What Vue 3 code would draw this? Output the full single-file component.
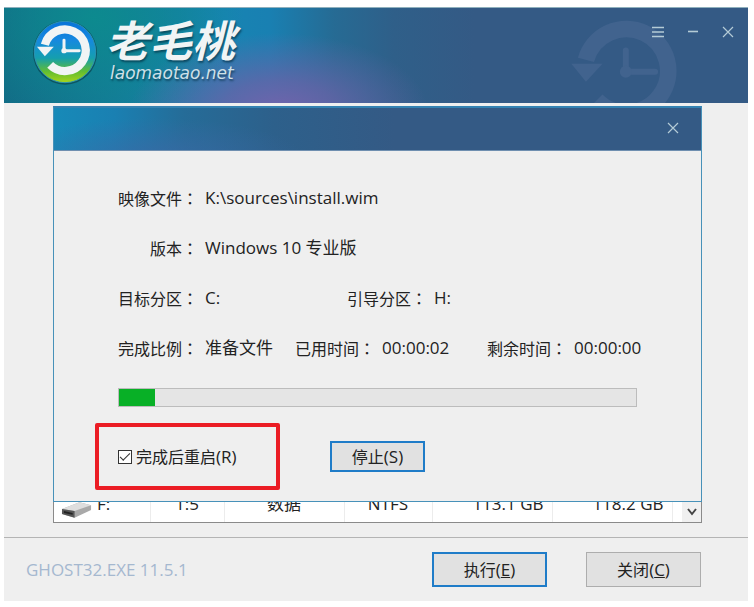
<template>
  <div class="window">
    <header class="banner">
      <svg class="watermark" viewBox="0 0 200 200" aria-hidden="true">
        <path class="ring" d="M55 139 A63 63 0 1 0 39 78" />
        <path class="arrow" d="M17 84 H64 L39 111 Z" />
        <path class="hands" d="M99 64 V96 H143" />
        <circle class="arrow" cx="99" cy="96" r="9" />
      </svg>
      <div class="brand">
        <svg class="logo" viewBox="0 0 200 200" aria-hidden="true">
          <defs>
            <linearGradient id="disc" x1="0" y1="0" x2="0" y2="1">
              <stop offset="0" stop-color="#0873d8" />
              <stop offset="0.3" stop-color="#1688e0" />
              <stop offset="0.6" stop-color="#159fae" />
              <stop offset="0.82" stop-color="#62bd32" />
              <stop offset="1" stop-color="#a8d51c" />
            </linearGradient>
          </defs>
          <circle cx="100" cy="102" r="97" fill="#0c5563" />
          <circle cx="100" cy="100" r="93" fill="url(#disc)" stroke="#2a94b4" stroke-width="3" />
          <path class="ring" d="M55 139 A63 63 0 1 0 39 78" />
          <path class="arrow" d="M15 84 H66 L39 113 Z" />
          <path class="hands" d="M97 64 V96 H143" />
          <circle class="arrow" cx="97" cy="96" r="8" />
        </svg>
        <div class="brand-text">
          <div class="brand-name">老毛桃</div>
          <div class="brand-url">laomaotao.net</div>
        </div>
      </div>
      <div class="controls">
        <button type="button" class="icon-btn" aria-label="菜单">
          <svg viewBox="0 0 12 12"><path d="M0 1.5H12M0 6H12M0 10.5H12" /></svg>
        </button>
        <button type="button" class="icon-btn" aria-label="最小化">
          <svg viewBox="0 0 12 12"><path d="M1 5.5H11" /></svg>
        </button>
        <button type="button" class="icon-btn" aria-label="关闭">
          <svg viewBox="0 0 12 12"><path class="thin" d="M1 1L11 11M11 1L1 11" /></svg>
        </button>
      </div>
    </header>

    <main class="content">
      <section class="dialog" role="dialog">
        <div class="dialog-bar">
          <button type="button" class="icon-btn" aria-label="关闭">
            <svg viewBox="0 0 12 12"><path class="thin" d="M1 1L11 11M11 1L1 11" /></svg>
          </button>
        </div>
        <div class="details">
          <div v-for="(row, i) in rows" :key="i" class="row" :class="row.layout">
            <div v-for="item in row.items" :key="item.label" class="field">
              <span class="label">{{ item.label }}<span class="colon">：</span></span>
              <span class="value">{{ item.value }}</span>
            </div>
          </div>
          <div class="progress" role="progressbar" :aria-valuenow="percent">
            <div class="progress-fill" :style="{ width: percent + '%' }"></div>
          </div>
        </div>
        <div class="actions">
          <div class="highlight">
            <input id="restart" v-model="restart" type="checkbox" />
            <label for="restart">完成后重启<span class="key">(R)</span></label>
          </div>
          <button type="button" class="btn primary stop">停止<span class="key">(S)</span></button>
        </div>
      </section>

      <div class="drives">
        <table>
          <tbody>
            <tr>
              <td>
                <div class="drive">
                  <svg viewBox="0 0 32 18" aria-hidden="true">
                    <path d="M1 8 L19 1 L31 4 L31 9 L14 17 L1 13 Z" fill="#a9a9a9" />
                    <path d="M1 8 L19 1 L31 4 L14 10 Z" fill="#dedede" />
                    <path d="M1 8 L14 10 V17 L1 13 Z" fill="#555" />
                    <path d="M3 10 L12 12 V14 L3 12 Z" fill="#222" />
                  </svg>
                  <span>F:</span>
                </div>
              </td>
              <td>1:5</td>
              <td>数据</td>
              <td>NTFS</td>
              <td class="size">113.1 GB</td>
              <td class="size">118.2 GB</td>
              <td></td>
            </tr>
          </tbody>
        </table>
        <button type="button" class="scroll-down" aria-label="向下滚动">
          <svg viewBox="0 0 10 8"><path d="M1 1L5 6L9 1" /></svg>
        </button>
      </div>
    </main>

    <footer class="footer">
      <span class="version">GHOST32.EXE 11.5.1</span>
      <button type="button" class="btn primary">执行<span class="key">(<u>E</u>)</span></button>
      <button type="button" class="btn">关闭<span class="key">(<u>C</u>)</span></button>
    </footer>
  </div>
</template>

<script setup>
import { ref } from 'vue'

const restart = ref(true)
const percent = ref(7)

const rows = [
  { layout: '', items: [{ label: '映像文件', value: 'K:\\sources\\install.wim' }] },
  { layout: '', items: [{ label: '版本', value: 'Windows 10 专业版' }] },
  {
    layout: 'two',
    items: [
      { label: '目标分区', value: 'C:' },
      { label: '引导分区', value: 'H:' },
    ],
  },
  {
    layout: 'three',
    items: [
      { label: '完成比例', value: '准备文件' },
      { label: '已用时间', value: '00:00:02' },
      { label: '剩余时间', value: '00:00:00' },
    ],
  },
]
</script>

<style>
body {
  margin: 0;
  background: #fff;
}
</style>

<style scoped>
* {
  box-sizing: border-box;
}

.window {
  margin: 7px 6px 6px 4px;
  background: #efefef;
  color: #222;
  font-family: 'Open Sans', 'Noto Sans CJK SC', sans-serif;
  font-size: 16px;
  line-height: 24px;
}

button {
  font: inherit;
  color: inherit;
  padding: 0;
}

.banner {
  position: relative;
  display: flex;
  justify-content: space-between;
  height: 96px;
  overflow: hidden;
  border-top: 1px solid #8fb0bd;
  background:
    radial-gradient(ellipse 150px 80px at 275px 105px, rgba(120, 98, 172, 0.95) 0%, rgba(108, 98, 168, 0.75) 40%, rgba(80, 96, 160, 0) 100%),
    radial-gradient(ellipse 150px 110px at 90px 10px, rgba(12, 140, 142, 0.9), rgba(12, 136, 142, 0) 100%),
    linear-gradient(to right, #126c86 0, #147a98 110px, #1784b2 220px, #1980b2 265px, #266b94 330px, #2f5f89 390px, #345a85 470px);
}

.watermark {
  position: absolute;
  top: 0;
  right: 55px;
  width: 133px;
  height: 133px;
  color: #41638e;
}

.ring {
  fill: none;
  stroke: currentColor;
  stroke-width: 25;
}

.arrow {
  fill: currentColor;
}

.hands {
  fill: none;
  stroke: currentColor;
  stroke-width: 9;
  stroke-linecap: round;
}

.brand {
  display: flex;
  padding: 11px 0 0 28px;
  color: #f1f4f5;
}

.logo {
  width: 66px;
  height: 66px;
}

.brand-text {
  padding-left: 8px;
  font-style: italic;
  text-shadow: 1px 2px 2px rgba(0, 40, 60, 0.6);
}

.brand-name {
  font-family: 'Noto Sans CJK SC', sans-serif;
  font-size: 43px;
  font-weight: 700;
  line-height: 38px;
}

.brand-url {
  padding: 6px 0 0 4px;
  font-family: 'DejaVu Sans', sans-serif;
  font-size: 17px;
  line-height: 20px;
  color: #cfe0e8;
}

.controls {
  position: relative;
  display: flex;
  height: 48px;
  padding-right: 3px;
}

.icon-btn {
  display: flex;
  align-items: center;
  justify-content: center;
  width: 35px;
  border: 0;
  background: none;
}

.icon-btn svg {
  width: 12px;
  height: 12px;
  fill: none;
  stroke: #b4cbd6;
  stroke-width: 1.6;
}

.icon-btn .thin {
  stroke-width: 1.2;
}

.content {
  padding: 3px 46px 14px 49px;
}

.dialog {
  border: 1px solid #4791b9;
  border-top: 2px solid #3482b2;
}

.dialog-bar {
  display: flex;
  justify-content: flex-end;
  height: 43px;
  padding: 0 11px 3px 0;
  border-bottom: 1px solid #6f8fb0;
  background:
    radial-gradient(ellipse 150px 40px at 100px 50px, rgba(62, 104, 166, 0.7), rgba(62, 104, 166, 0)),
    linear-gradient(to right, #178ab8 0, #1a80b2 60px, #256c98 130px, #2d608b 220px, #345a85 340px);
}

.details {
  padding: 35px 64px 16px;
}

.row {
  display: grid;
  height: 24px;
  margin-bottom: 26px;
}

.two {
  grid-template-columns: 229px 1fr;
}

.three {
  grid-template-columns: 177px 192px 1fr;
}

.field {
  display: flex;
  gap: 7px;
  white-space: nowrap;
}

.label {
  flex: 0 0 80px;
  text-align: right;
}

.colon {
  font-family: 'Noto Sans CJK TC', sans-serif;
}

.value,
.key,
.version,
.drives {
  font-size: 17px;
}

.progress {
  height: 19px;
  margin-top: 28px;
  border: 1px solid #bcbcbc;
  background: #e5e5e5;
}

.progress-fill {
  height: 100%;
  background: #08b026;
}

.actions {
  display: flex;
  align-items: center;
  gap: 50px;
  padding: 0 41px 11px;
}

.highlight {
  display: flex;
  align-items: center;
  gap: 4px;
  width: 185px;
  height: 67px;
  padding-left: 19px;
  border: 4px solid #eb1c24;
  border-radius: 2px;
}

.highlight input {
  appearance: none;
  display: grid;
  place-items: center;
  width: 14px;
  height: 14px;
  margin: 0;
  border: 1px solid #333;
  background: #fff;
}

.highlight input:checked::before {
  content: '';
  width: 9px;
  height: 4px;
  border: solid #333;
  border-width: 0 0 1px 1px;
  transform: translateY(-1px) rotate(-45deg);
}

.btn {
  width: 115px;
  height: 35px;
  border: 1px solid #adadad;
  background: #e1e1e1;
}

.btn.primary {
  border: 2px solid #1f7cc8;
}

.btn.stop {
  width: 95px;
  height: 31px;
}

/* only the lower part of the last row shows under the dialog */
.drives {
  display: flex;
  align-items: flex-end;
  height: 21px;
  overflow: hidden;
  border: 1px solid #8a8a8a;
  border-top: 0;
  background: #fff;
}

table {
  flex: 1;
  width: 100%;
  table-layout: fixed;
  border-collapse: collapse;
}

td {
  width: 120px;
  height: 36px;
  padding: 0;
  border-right: 1px solid #ececec;
  text-align: center;
}

td:nth-child(1) {
  width: 96px;
}

td:nth-child(2) {
  width: 74px;
}

td:nth-child(4) {
  width: 88px;
}

td:last-child {
  width: auto;
  border: 0;
}

td.size {
  padding-right: 8px;
  text-align: right;
}

.drive {
  display: flex;
  align-items: center;
  gap: 5px;
  height: 36px;
  padding-left: 7px;
}

.drive svg {
  align-self: flex-end;
  width: 31px;
  height: 18px;
  margin-bottom: 3px;
}

.scroll-down {
  display: flex;
  flex: none;
  align-items: center;
  justify-content: center;
  width: 19px;
  height: 20px;
  border: 0;
  background: #f0f0f0;
}

.scroll-down svg {
  width: 10px;
  height: 8px;
  fill: none;
  stroke: #444;
  stroke-width: 2;
}

.footer {
  display: flex;
  align-items: center;
  gap: 39px;
  height: 64px;
  padding: 0 47px 0 22px;
  border-top: 1px solid #b4b4b4;
}

.version {
  margin-right: auto;
  color: #a5b8cf;
}
</style>
